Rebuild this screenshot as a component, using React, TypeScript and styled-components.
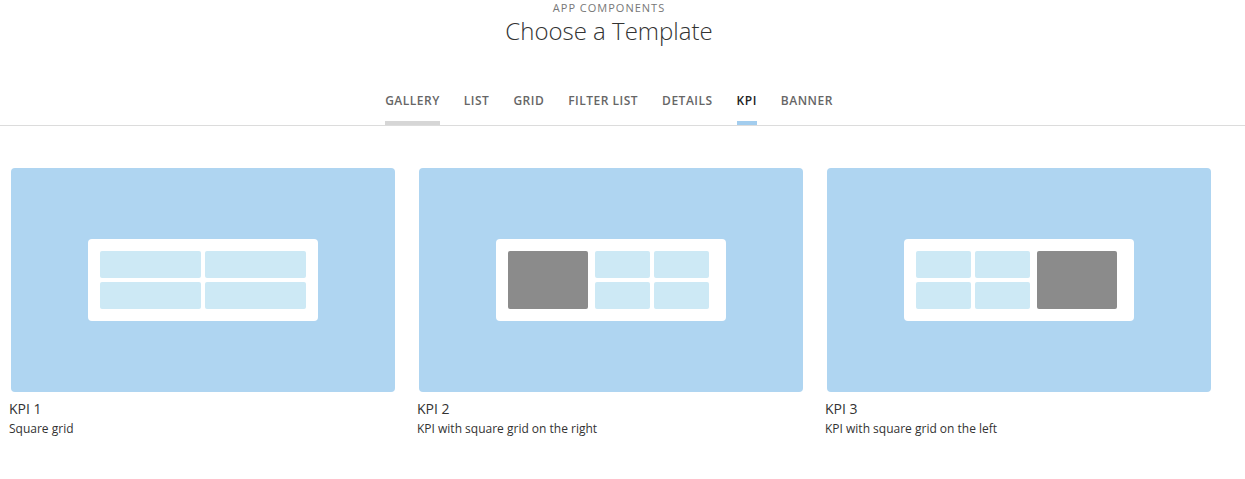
import React from "react";
import styled, { createGlobalStyle } from "styled-components";

const Global = createGlobalStyle`
  html, body { margin: 0; padding: 0; background: #fff; }
  body { font-family: "Open Sans", "Noto Sans", sans-serif; color: #333; }
  * { box-sizing: border-box; }
`;

const Page = styled.div`
  width: 100%;
`;

const Header = styled.header`
  display: flex;
  flex-direction: column;
  align-items: center;
  padding-right: 27px;
`;

const Eyebrow = styled.div`
  font-size: 11px;
  line-height: 14px;
  padding-top: 1px;
  letter-spacing: 1px;
  color: #777;
  text-transform: uppercase;
`;

const Title = styled.h1`
  margin: 0;
  font-size: 24px;
  line-height: 31px;
  font-weight: 300;
  color: #333;
`;

const Tabs = styled.nav`
  margin-top: 46px;
  padding-right: 27px;
  display: flex;
  justify-content: center;
  gap: 24px;
  border-bottom: 1px solid #dcdcdc;
`;

const Tab = styled.div<{ $active?: boolean; $hover?: boolean }>`
  font-size: 12px;
  line-height: 16px;
  font-weight: 600;
  letter-spacing: 0.5px;
  text-transform: uppercase;
  color: ${(p) => (p.$active ? "#222" : "#666")};
  padding-top: 1px;
  padding-bottom: 12px;
  border-bottom: 4px solid
    ${(p) => (p.$active ? "#a3cdee" : p.$hover ? "#d6d6d6" : "transparent")};
`;

const Cards = styled.div`
  margin-top: 42px;
  padding-left: 9px;
  display: grid;
  grid-template-columns: repeat(3, 388px);
  gap: 20px;
`;

const Card = styled.div`
  display: flex;
  flex-direction: column;
`;

const Preview = styled.div`
  margin: 0 2px;
  height: 224px;
  background: #afd5f1;
  border-radius: 4px;
  display: flex;
  align-items: center;
  justify-content: center;
`;

const Panel = styled.div<{ $wide?: boolean }>`
  width: 230px;
  height: 82px;
  background: #fff;
  border-radius: 4px;
  padding: ${(p) => (p.$wide ? "12px" : "12px 17px 12px 12px")};
  display: flex;
  gap: 7px;
`;

const CellGrid = styled.div`
  flex: 1;
  display: grid;
  grid-template-columns: 1fr 1fr;
  grid-template-rows: 1fr 1fr;
  gap: 4px;
`;

const Cell = styled.div`
  background: #cde9f5;
  border-radius: 2px;
`;

const Block = styled.div`
  width: 80px;
  background: #8b8b8b;
  border-radius: 2px;
`;

const CardTitle = styled.div`
  margin-top: 7px;
  font-size: 14px;
  line-height: 20px;
  color: #333;
`;

const CardDesc = styled.div`
  margin-top: 1px;
  font-size: 12px;
  line-height: 18px;
  color: #333;
`;

const tabs = ["Gallery", "List", "Grid", "Filter List", "Details", "KPI", "Banner"];

const Cells = () => (
  <CellGrid>
    <Cell />
    <Cell />
    <Cell />
    <Cell />
  </CellGrid>
);

export default function App() {
  return (
    <Page>
      <Global />
      <Header>
        <Eyebrow>App Components</Eyebrow>
        <Title>Choose a Template</Title>
      </Header>
      <Tabs>
        {tabs.map((t) => (
          <Tab key={t} $active={t === "KPI"} $hover={t === "Gallery"}>
            {t}
          </Tab>
        ))}
      </Tabs>
      <Cards>
        <Card>
          <Preview>
            <Panel $wide>
              <Cells />
            </Panel>
          </Preview>
          <CardTitle>KPI 1</CardTitle>
          <CardDesc>Square grid</CardDesc>
        </Card>
        <Card>
          <Preview>
            <Panel>
              <Block />
              <Cells />
            </Panel>
          </Preview>
          <CardTitle>KPI 2</CardTitle>
          <CardDesc>KPI with square grid on the right</CardDesc>
        </Card>
        <Card>
          <Preview>
            <Panel>
              <Cells />
              <Block />
            </Panel>
          </Preview>
          <CardTitle>KPI 3</CardTitle>
          <CardDesc>KPI with square grid on the left</CardDesc>
        </Card>
      </Cards>
    </Page>
  );
}
